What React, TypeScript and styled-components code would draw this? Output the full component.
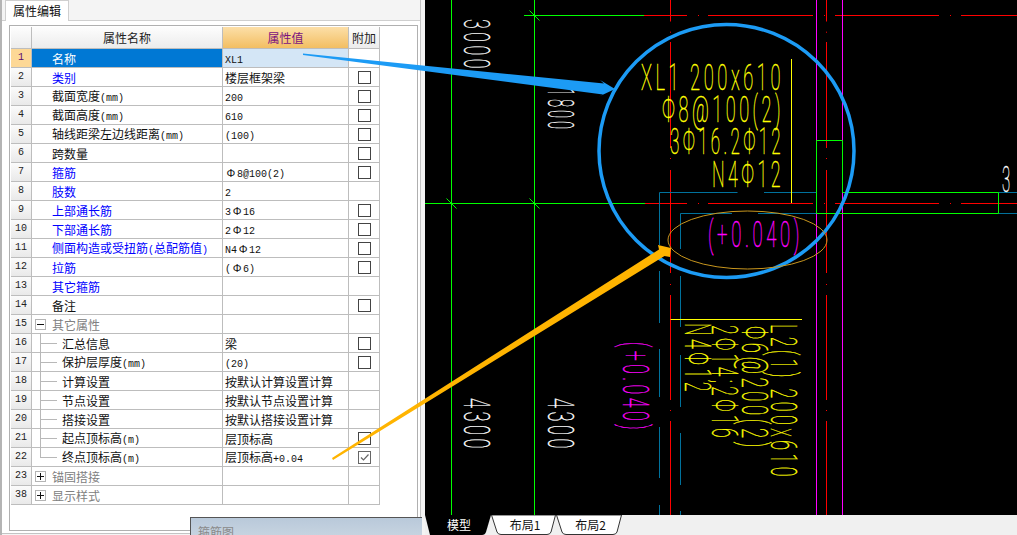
import React from "react";
import styled, { createGlobalStyle } from "styled-components";

const Global = createGlobalStyle`
  html, body { margin: 0; padding: 0; background: #f0f0f0; }
  #root { width: 1017px; height: 535px; }
`;

const CJK = `"Noto Sans CJK SC", "Liberation Sans", sans-serif`;

const Page = styled.div`
  position: relative;
  width: 1017px;
  height: 535px;
  display: flex;
  overflow: hidden;
  font-family: ${CJK};
  font-size: 12px;
  color: #111;
`;

const LeftPanel = styled.div`
  width: 425px;
  flex: none;
  box-sizing: border-box;
  border-left: 2px solid #b4b4b4;
  background: #f4f4f4;
`;

const Frame = styled.div`
  width: 419px;
  height: 534px;
  box-sizing: border-box;
  display: flex;
  flex-direction: column;
  background: #fff;
  border-right: 1px solid #c4c4c4;
  border-bottom: 1px solid #c4c4c4;
`;

const TabStrip = styled.div`
  height: 21px;
  flex: none;
  box-sizing: border-box;
  display: flex;
  align-items: flex-end;
  padding-left: 3px;
  border-bottom: 1px solid #cfcfcf;
  background: #f4f4f4;
`;

const PaneTab = styled.div`
  width: 64px;
  height: 21px;
  margin-top: 1px;
  margin-bottom: -1px;
  box-sizing: border-box;
  border: 1px solid #cfcfcf;
  border-bottom: none;
  background: #fff;
  display: flex;
  align-items: center;
  justify-content: center;
  line-height: 1;
`;

const PropertyBox = styled.div`
  margin: 4px 0 0 7px;
  width: 409px;
  height: 506px;
  box-sizing: border-box;
  border: 1px solid #b0b0b0;
  padding: 1px 0 0 1px;
`;

const Row = styled.div<{ $head?: boolean }>`
  display: grid;
  grid-template-columns: 21px 191px 126px 31px;
  width: 369px;
  height: ${(p) => (p.$head ? 22 : 19)}px;
  box-sizing: border-box;
`;

const Cell = styled.div`
  box-sizing: border-box;
  border-right: 1px solid #bdbdbd;
  border-bottom: 1px solid #bdbdbd;
  padding-top: 1px;
  display: flex;
  align-items: center;
  white-space: nowrap;
  line-height: 1;
`;

const NumCell = styled(Cell)<{ $active?: boolean }>`
  justify-content: center;
  padding-top: 0;
  font-family: "Liberation Mono", monospace;
  font-size: 10px;
  color: ${(p) => (p.$active ? "#5a0a70" : "#222")};
  background: ${(p) => (p.$active ? "#fdd896" : "linear-gradient(#fbfbfb, #e9e9e9)")};
`;

const HeadCell = styled(Cell)<{ $active?: boolean }>`
  justify-content: center;
  padding-top: 0;
  color: ${(p) => (p.$active ? "#7a1280" : "#222")};
  background: ${(p) =>
    p.$active ? "linear-gradient(#fcdfa8, #f3be62)" : "linear-gradient(#fdfdfd, #ececec)"};
`;

const NameCell = styled(Cell)<{ $kind: "top" | "child" | "last" | "group"; $tone: string; $active?: boolean }>`
  position: relative;
  padding-left: ${(p) => (p.$kind === "group" ? 3 : p.$kind === "top" ? 20 : 30)}px;
  color: ${(p) => (p.$active ? "#fff" : p.$tone)};
  background: ${(p) => (p.$active ? "#0078d4" : "transparent")};
  ${(p) =>
    p.$kind === "child" || p.$kind === "last"
      ? `
    &::before {
      content: "";
      position: absolute;
      left: 8px;
      top: -1px;
      bottom: ${p.$kind === "last" ? 8 : -1}px;
      border-left: 1px solid #b8b8b8;
    }
    &::after {
      content: "";
      position: absolute;
      left: 9px;
      width: 16px;
      top: 9px;
      border-top: 1px solid #b8b8b8;
    }`
      : ""}
`;

const ValueCell = styled(Cell)<{ $active?: boolean }>`
  padding-left: 2px;
  background: ${(p) => (p.$active ? "#d4e6f6" : "transparent")};
`;

const AddCell = styled(Cell)`
  justify-content: center;
  padding-top: 0;
`;

const Lat = styled.span`
  font-family: "Liberation Mono", monospace;
  font-size: 10px;
`;

const Steel = styled.span`
  display: inline-block;
  width: 12px;
  text-align: center;
  font-family: "Liberation Sans", sans-serif;
  font-size: 11px;
`;

const Expander = styled.span`
  width: 11px;
  height: 11px;
  box-sizing: border-box;
  border: 1px solid #b4b4b4;
  margin-right: 6px;
  display: flex;
  align-items: center;
  justify-content: center;
  flex: none;
  background: #fff;
`;

const Check = styled.span`
  width: 13px;
  height: 13px;
  box-sizing: border-box;
  border: 1px solid #444;
  background: #fff;
  display: block;
`;

const CheckOn = styled(Check)`
  border-color: #666;
  display: flex;
  align-items: center;
  justify-content: center;
`;

const RightColumn = styled.div`
  flex: 1;
  display: flex;
  flex-direction: column;
  min-width: 0;
`;

const Cad = styled.svg`
  display: block;
  width: 592px;
  height: 515px;
  background: #000;
  flex: none;
`;

const LayoutBar = styled.div`
  flex: 1;
  background: #f0f0f0;
  display: flex;
`;

const LayoutTab = styled.div<{ $active?: boolean; $w: number }>`
  position: relative;
  width: ${(p) => p.$w}px;
  height: 20px;
  flex: none;
  display: flex;
  align-items: center;
  justify-content: center;
  padding-left: ${(p) => (p.$active ? 2 : 3)}px;
  box-sizing: border-box;
  color: ${(p) => (p.$active ? "#fff" : "#111")};
  line-height: 1;
  & > span { position: relative; }
`;

const TabShape = styled.svg`
  position: absolute;
  left: 0;
  top: 0;
  width: 100%;
  height: 100%;
`;

const FloatingPanel = styled.div`
  position: absolute;
  left: 190px;
  top: 517px;
  width: 232px;
  height: 18px;
  box-sizing: border-box;
  border-top: 1px solid #555;
  border-left: 1px solid #555;
  background: linear-gradient(#b9c9da, #c6d3e0);
  padding: 7px 0 0 7px;
  overflow: hidden;
  color: #8a8a8a;
  line-height: 1.2;
`;

const Overlay = styled.svg`
  position: absolute;
  left: 0;
  top: 0;
  width: 1017px;
  height: 535px;
  pointer-events: none;
`;

const CadLabel = styled.text<{ $color: string }>`
  font-family: Roboto, "Liberation Sans", sans-serif;
  font-weight: 100;
  letter-spacing: 7px;
  fill: ${(p) => p.$color};
  stroke: ${(p) => p.$color};
  stroke-width: 0.45px;
`;

/* ---------- text helpers ---------- */

function mixed(text: string) {
  const parts = text.split(/(Φ|[\x20-\x7e]+)/).filter(Boolean);
  return parts.map((part, i) => {
    if (part === "Φ") return <Steel key={i}>Φ</Steel>;
    if (/^[\x20-\x7e]+$/.test(part)) return <Lat key={i}>{part}</Lat>;
    return <span key={i}>{part}</span>;
  });
}

type RowData = {
  n: number;
  name: string;
  value?: string;
  kind?: "top" | "child" | "last" | "group";
  tone?: string;
  box?: boolean;
  checked?: boolean;
  open?: boolean;
};

const BLUE = "#0000ff";
const GREY = "#808080";

const rows: RowData[] = [
  { n: 1, name: "名称", value: "XL1" },
  { n: 2, name: "类别", value: "楼层框架梁", tone: BLUE, box: true },
  { n: 3, name: "截面宽度(mm)", value: "200", box: true },
  { n: 4, name: "截面高度(mm)", value: "610", box: true },
  { n: 5, name: "轴线距梁左边线距离(mm)", value: "(100)", box: true },
  { n: 6, name: "跨数量", box: true },
  { n: 7, name: "箍筋", value: "Φ8@100(2)", tone: BLUE, box: true },
  { n: 8, name: "肢数", value: "2", tone: BLUE },
  { n: 9, name: "上部通长筋", value: "3Φ16", tone: BLUE, box: true },
  { n: 10, name: "下部通长筋", value: "2Φ12", tone: BLUE, box: true },
  { n: 11, name: "侧面构造或受扭筋(总配筋值)", value: "N4Φ12", tone: BLUE, box: true },
  { n: 12, name: "拉筋", value: "(Φ6)", tone: BLUE, box: true },
  { n: 13, name: "其它箍筋", tone: BLUE },
  { n: 14, name: "备注", box: true },
  { n: 15, name: "其它属性", kind: "group", tone: GREY, open: true },
  { n: 16, name: "汇总信息", value: "梁", kind: "child", box: true },
  { n: 17, name: "保护层厚度(mm)", value: "(20)", kind: "child", box: true },
  { n: 18, name: "计算设置", value: "按默认计算设置计算", kind: "child" },
  { n: 19, name: "节点设置", value: "按默认节点设置计算", kind: "child" },
  { n: 20, name: "搭接设置", value: "按默认搭接设置计算", kind: "child" },
  { n: 21, name: "起点顶标高(m)", value: "层顶标高", kind: "child", box: true },
  { n: 22, name: "终点顶标高(m)", value: "层顶标高+0.04", kind: "last", box: true, checked: true },
  { n: 23, name: "锚固搭接", kind: "group", tone: GREY },
  { n: 38, name: "显示样式", kind: "group", tone: GREY },
];

/* ---------- CAD drawing data ---------- */

const GREEN = "#00ff00";
const RED = "#ff0000";
const MAGENTA = "#ff00ff";
const YELLOW = "#ffff00";
const TEAL = "#00719c";
const WHITE = "#ffffff";

type Seg = [number, number, number, number, string];

const dashV = (x: number): Seg[] =>
  [
    [0, 21.5], [31.7, 32.7], [42, 148], [158, 159], [170, 273], [284, 285], [295, 400], [410, 411], [421, 515],
  ].map(([a, b]) => [x, a, x, b, RED] as Seg);

const dashH = (y: number, start: number): Seg[] =>
  [
    [start, 687], [698, 699], [708, 813], [824, 825], [835, 939], [950, 951], [961, 1017],
  ].map(([a, b]) => [a, y, b, y, RED] as Seg);

const tick = (x: number, y: number): Seg => [x - 5, y - 5, x + 5, y + 5, GREEN];

const segs: Seg[] = [
  [451.5, 0, 451.5, 515, GREEN],
  [534.5, 0, 534.5, 515, GREEN],
  [524, 15.5, 644, 15.5, GREEN],
  [425, 203.5, 645, 203.5, GREEN],
  tick(534.5, 15.5),
  tick(451.5, 203.5),
  tick(534.5, 203.5),
  ...dashH(15.5, 644),
  ...dashH(203.5, 645),
  ...dashV(670.5),
  ...dashV(826.5),
  [816.5, 0, 816.5, 515, MAGENTA],
  [842.5, 0, 842.5, 515, MAGENTA],
  [659.5, 192.5, 737.5, 192.5, TEAL],
  [764, 192.5, 816, 192.5, TEAL],
  [998, 192.5, 1017, 192.5, TEAL],
  [659.5, 192.5, 659.5, 245, TEAL],
  [659.5, 271, 659.5, 323, TEAL],
  [659.5, 349, 659.5, 397, TEAL],
  [659.5, 427, 659.5, 478, TEAL],
  [659.5, 505, 659.5, 515, TEAL],
  [680.5, 213.5, 732, 213.5, TEAL],
  [758, 213.5, 816, 213.5, TEAL],
  [998, 213.5, 1017, 213.5, TEAL],
  [680.5, 213.5, 680.5, 249, TEAL],
  [680.5, 276, 680.5, 327, TEAL],
  [680.5, 355, 680.5, 407, TEAL],
  [680.5, 433, 680.5, 485, TEAL],
  [680.5, 511, 680.5, 515, TEAL],
  [816.5, 140.5, 842.5, 140.5, GREEN],
  [816.5, 140.5, 816.5, 213.5, GREEN],
  [842.5, 140.5, 842.5, 192.5, GREEN],
  [842.5, 192.5, 998.5, 192.5, GREEN],
  [998.5, 192.5, 998.5, 213.5, GREEN],
  [816.5, 213.5, 998.5, 213.5, GREEN],
  [791.5, 59, 791.5, 203, YELLOW],
  [670.5, 319.5, 802, 319.5, YELLOW],
];

type Label = { t: string; x: number; y: number; len: number; c: string; v?: boolean };

const labels: Label[] = [
  { t: "XL1 200x610", x: 641, y: 90, len: 143, c: YELLOW },
  { t: "Φ8@100(2)", x: 662, y: 122, len: 122, c: YELLOW },
  { t: "3Φ16.2Φ12", x: 670, y: 154, len: 114, c: YELLOW },
  { t: "N4Φ12", x: 712, y: 187, len: 72, c: YELLOW },
  { t: "(+0.040)", x: 708, y: 247, len: 95, c: MAGENTA },
  { t: "3", x: 1002, y: 192, len: 11, c: WHITE },
  { t: "3000", x: 464, y: 19, len: 53, c: WHITE, v: true },
  { t: "1800", x: 548, y: 88, len: 44, c: WHITE, v: true },
  { t: "4300", x: 464, y: 398, len: 54, c: WHITE, v: true },
  { t: "4300", x: 548, y: 398, len: 54, c: WHITE, v: true },
  { t: "(+0.040)", x: 623, y: 342, len: 91, c: MAGENTA, v: true },
  { t: "L2(1) 200x610", x: 771, y: 324, len: 156, c: YELLOW, v: true },
  { t: "Φ6@200(2)", x: 742, y: 326, len: 125, c: YELLOW, v: true },
  { t: "2Φ14;2Φ16", x: 712, y: 325, len: 116, c: YELLOW, v: true },
  { t: "N4Φ12", x: 685, y: 323, len: 72, c: YELLOW, v: true },
];

const layoutTabs = [
  { label: "模型", w: 66, active: true, d: "M0 0 H66 L61 17 Q60 20 57 20 H5 L0 0 Z" },
  { label: "布局1", w: 65, d: "M0.5 0 H64.5 L60 17 Q59 19.5 56 19.5 H10 Q7 19.5 6 17 Z" },
  { label: "布局2", w: 66, d: "M0.5 0 H65.5 L61 17 Q60 19.5 57 19.5 H10 Q7 19.5 6 17 Z" },
];

export default function App() {
  return (
    <Page>
      <Global />
      <LeftPanel>
        <Frame>
          <TabStrip>
            <PaneTab>属性编辑</PaneTab>
          </TabStrip>
          <PropertyBox>
            <Row $head>
              <HeadCell />
              <HeadCell>属性名称</HeadCell>
              <HeadCell $active>属性值</HeadCell>
              <HeadCell>附加</HeadCell>
            </Row>
            {rows.map((r) => {
              const active = r.n === 1;
              return (
                <Row key={r.n}>
                  <NumCell $active={active}>{r.n}</NumCell>
                  <NameCell $kind={r.kind ?? "top"} $tone={r.tone ?? "#111"} $active={active}>
                    {r.kind === "group" && (
                      <Expander>
                        <svg width="9" height="9" viewBox="0 0 9 9">
                          <path d={r.open ? "M1 4.5H8" : "M1 4.5H8M4.5 1V8"} stroke="#111" fill="none" />
                        </svg>
                      </Expander>
                    )}
                    <span>{mixed(r.name)}</span>
                  </NameCell>
                  <ValueCell $active={active}>{r.value ? <span>{mixed(r.value)}</span> : null}</ValueCell>
                  <AddCell>
                    {r.box &&
                      (r.checked ? (
                        <CheckOn>
                          <svg width="11" height="11" viewBox="0 0 11 11">
                            <path d="M2 5.5L4.5 8L9.5 2.5" stroke="#666" strokeWidth="1.2" fill="none" />
                          </svg>
                        </CheckOn>
                      ) : (
                        <Check />
                      ))}
                  </AddCell>
                </Row>
              );
            })}
          </PropertyBox>
        </Frame>
      </LeftPanel>

      <RightColumn>
        <Cad viewBox="425 0 592 515">
          {segs.map(([x1, y1, x2, y2, c], i) => (
            <line key={i} x1={x1} y1={y1} x2={x2} y2={y2} stroke={c} strokeWidth={1} />
          ))}
          {labels.map((l, i) => (
            <CadLabel
              key={i}
              $color={l.c}
              fontSize={36}
              textLength={l.len}
              lengthAdjust="spacingAndGlyphs"
              transform={`translate(${l.x} ${l.y})${l.v ? " rotate(90)" : ""}`}
            >
              {l.t}
            </CadLabel>
          ))}
        </Cad>
        <LayoutBar>
          {layoutTabs.map((t) => (
            <LayoutTab key={t.label} $active={t.active} $w={t.w}>
              <TabShape viewBox={`0 0 ${t.w} 20`}>
                <path d={t.d} fill={t.active ? "#000" : "#fff"} stroke={t.active ? "none" : "#333"} strokeWidth="1" />
              </TabShape>
              <span>{t.label}</span>
            </LayoutTab>
          ))}
        </LayoutBar>
      </RightColumn>

      <FloatingPanel>箍筋图</FloatingPanel>

      <Overlay viewBox="0 0 1017 535">
        <ellipse cx="726.5" cy="151" rx="127.5" ry="126.5" fill="none" stroke="#1c9bf5" strokeWidth="3.5" />
        <ellipse cx="747.5" cy="240" rx="79.5" ry="29" fill="none" stroke="#c8961e" strokeWidth="1" />
        <path d="M303 53.5 L604 83.5 L600 80 L615 89 L598 97 L603 94.5 L303 55 Z" fill="#1c9bf5" />
        <path d="M332 458 L659 249.5 L658 245 L671 248 L670 257 L664.5 256 L333 460 Z" fill="#ffb400" />
      </Overlay>
    </Page>
  );
}
